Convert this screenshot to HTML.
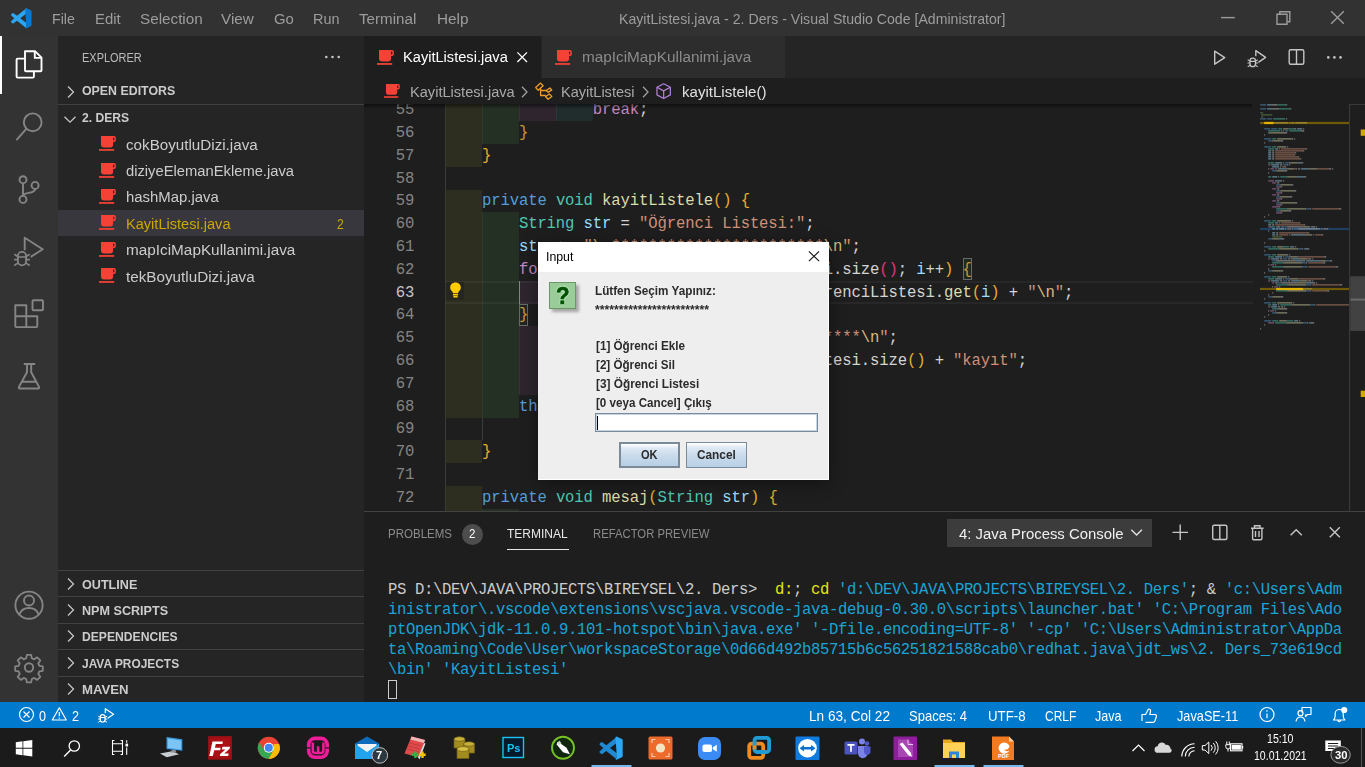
<!DOCTYPE html>
<html><head><meta charset="utf-8"><title>VS Code</title>
<style>
*{margin:0;padding:0;box-sizing:border-box}
html,body{width:1365px;height:767px;overflow:hidden;background:#1e1e1e}
body{position:relative;font-family:"Liberation Sans",sans-serif}
.a{position:absolute}
.t{position:absolute;white-space:pre;line-height:20px;height:20px;transform-origin:0 50%;display:block}
.fs{font-family:"Liberation Sans",sans-serif}
.fm{font-family:"Liberation Mono",monospace}
svg{position:absolute;overflow:visible}
.cl{position:absolute;left:445px;height:23px;white-space:pre;font-family:"Liberation Mono",monospace;font-size:15.6px;letter-spacing:-0.12px;line-height:23px;color:#d4d4d4}
.ln{position:absolute;left:364px;width:50.3px;text-align:right;height:23px;font-family:"Liberation Mono",monospace;font-size:15.6px;letter-spacing:-0.12px;line-height:23px;color:#858585}
.ig{position:absolute;width:37px}
.tl{position:absolute;left:388px;height:20px;white-space:pre;font-family:"Liberation Mono",monospace;font-size:15.6px;letter-spacing:-0.12px;line-height:20px;color:#1ba4d6}
.tl{letter-spacing:-0.36px}

</style></head>
<body>
<!-- title bar -->
<div class="a" style="left:0;top:0;width:1365px;height:36px;background:#323233"></div>
<!-- activity bar -->
<div class="a" style="left:0;top:36px;width:58px;height:666px;background:#333333"></div>
<div class="a" style="left:0;top:36px;width:2px;height:58px;background:#ffffff"></div>
<!-- sidebar -->
<div class="a" style="left:58px;top:36px;width:306px;height:666px;background:#252526"></div>
<div class="a" style="left:58px;top:104px;width:306px;height:1px;background:#414141"></div>
<div class="a" style="left:58px;top:210px;width:306px;height:26px;background:#37373d"></div>
<div class="a" style="left:58px;top:570px;width:306px;height:1px;background:#414141"></div>
<div class="a" style="left:58px;top:596px;width:306px;height:1px;background:#414141"></div>
<div class="a" style="left:58px;top:623px;width:306px;height:1px;background:#414141"></div>
<div class="a" style="left:58px;top:649px;width:306px;height:1px;background:#414141"></div>
<div class="a" style="left:58px;top:676px;width:306px;height:1px;background:#414141"></div>
<!-- tabs -->
<div class="a" style="left:364px;top:36px;width:1001px;height:42px;background:#252526"></div>
<div class="a" style="left:364px;top:36px;width:177px;height:42px;background:#1e1e1e"></div>
<div class="a" style="left:542px;top:36px;width:243px;height:42px;background:#2d2d2d"></div>
<!-- breadcrumbs + editor -->
<div class="a" style="left:364px;top:78px;width:1001px;height:434px;background:#1e1e1e"></div>
<!-- panel -->
<div class="a" style="left:364px;top:511px;width:1001px;height:1px;background:#424242"></div>
<div class="a" style="left:364px;top:512px;width:1001px;height:190px;background:#1e1e1e"></div>
<div class="a" style="left:507px;top:549px;width:62px;height:1px;background:#e7e7e7"></div>
<div class="a" style="left:462px;top:524px;width:21px;height:21px;border-radius:11px;background:#4d4d4d"></div>
<div class="a" style="left:947px;top:519px;width:205px;height:28px;background:#3c3c3c"></div>
<div class="a" style="left:388px;top:680px;width:9px;height:19px;border:1px solid #cccccc"></div>
<!-- status bar -->
<div class="a" style="left:0;top:702px;width:1365px;height:26px;background:#007acc"></div>
<!-- taskbar -->
<div class="a" style="left:0;top:728px;width:1365px;height:39px;background:#1b1b1b"></div>

<svg width="0" height="0" style="left:0;top:0"><defs>
<symbol id="jv" viewBox="0 0 17 15" overflow="visible"><path d="M2 0H15a1.9 1.9 0 0 1 1.9 1.9V4.1A1.9 1.9 0 0 1 15 6H14.1V8.5a3 3 0 0 1-3 3H5a3 3 0 0 1-3-3zM14.1 1.6V4.4H14.6a.8 .8 0 0 0 .8-.8V2.4a.8 .8 0 0 0-.8-.8z" fill="#f44336" fill-rule="evenodd"/><rect x="0" y="13" width="15.2" height="1.9" fill="#e53f33"/></symbol>
<symbol id="chr" viewBox="0 0 8 12" overflow="visible"><path d="M1 .5l5.5 5.5L1 11.5" fill="none" stroke="#c5c5c5" stroke-width="1.3"/></symbol>
</defs></svg>
<!-- vscode logo -->
<svg style="left:10.5px;top:8px" width="20.5" height="20.5" viewBox="0 0 100 100"><path d="M75 .9 29.4 38 12.2 25a4.2 4.2 0 0 0-5.3.2L1.4 30.2a4.2 4.2 0 0 0 0 6.2L16.3 50 1.4 63.6a4.2 4.2 0 0 0 0 6.2l5.5 5a4.2 4.2 0 0 0 5.3.2l17.2-13L75 99.1 75 72.7 45.1 50 75 27.3z" fill="#2aa6f3"/><path d="M68.8 2.1a6.2 6.2 0 0 1 7.1-1.2l20.6 9.9a6.2 6.2 0 0 1 3.5 5.6v67.2a6.2 6.2 0 0 1-3.5 5.6l-20.6 9.9a6.2 6.2 0 0 1-7.1-1.2L75 92z" fill="#0b78cf"/></svg>
<!-- window controls -->
<svg style="left:0;top:0" width="1365" height="36"><g fill="none" stroke="#9c9c9c" stroke-width="1.400"><path d="M1221 17.6h13.8"/><path d="M1277 14.2h10v10h-10z"/><path d="M1279.8 14.2v-2.4h10v10h-2.6"/><path d="M1331.2 11.2l12.6 12.6M1343.8 11.2l-12.6 12.6"/></g></svg>
<!-- activity bar -->
<svg style="left:0;top:36px" width="58" height="666" viewBox="0 36 58 666"><g fill="none" stroke="#858585" stroke-width="1.9" stroke-linejoin="round">
<g stroke="#ffffff"><path d="M25 51.2h10l6.5 6.5v12.5a1 1 0 0 1-1 1H26a1 1 0 0 1-1-1z"/><path d="M34.8 51.2v6.7h6.7"/><path d="M25 58.6h-7.4a1 1 0 0 0-1 1v17a1 1 0 0 0 1 1h15.3a1 1 0 0 0 1-1v-5.4"/></g>
<circle cx="32.7" cy="122.3" r="8.9"/><path d="M26.3 128.8 16.4 140.2"/>
<circle cx="23" cy="179.7" r="3.5"/><circle cx="23" cy="199.4" r="3.5"/><circle cx="35.1" cy="185.4" r="3.5"/><path d="M23 183.2v12.7M35.1 188.9c0 5.5-12.1 2.500-12.1 7"/>
<path d="M24.700 250.300v-12.500l18 11.400-12 7.700"/><rect x="17.900" y="251.900" width="8.200" height="13.500" rx="4.100" stroke-width="1.800"/><path d="M17.900 257h8.200M14.300 254.300l3.500 2.200M29.600 254.300l-3.500 2.200M14.100 259.600h3.700M29.900 259.600h-3.700M14.300 265.500l3.500-2.400M29.600 265.500l-3.500-2.400" stroke-width="1.600"/>
<path d="M15.300 305.300h11v11h-11zM15.300 316.300h11v10.800h-10a1 1 0 0 1-1-1zM26.300 316.300h11v9.800a1 1 0 0 1-1 1h-10z"/><rect x="32.500" y="300.200" width="10.500" height="10" rx="1"/>
<path d="M23.800 364h11.400M27 364v8.300L18.900 387a1 1 0 0 0 .9 1.500h18.400a1 1 0 0 0 .9-1.500L31.200 372.300V364M21.800 381.800h14.600"/>
<circle cx="29" cy="605.200" r="13.600"/><circle cx="29" cy="600.500" r="5"/><path d="M19.500 614.500c1.500-4.800 5.500-6.500 9.500-6.500s8 1.700 9.500 6.500"/>
<circle cx="29" cy="667.500" r="4.200"/>
<path transform="translate(29 667.500) scale(.94) translate(-29 -667.500)" d="M26.700 654h4.600l.7 3.700 2.600 1.100 3.100-2.100 3.300 3.300-2.100 3.100 1.100 2.600 3.700.7v4.600l-3.700.7-1.100 2.600 2.100 3.100-3.300 3.300-3.100-2.100-2.600 1.100-.7 3.700h-4.600l-.7-3.700-2.600-1.100-3.100 2.100-3.300-3.300 2.100-3.100-1.100-2.600-3.700-.7v-4.600l3.700-.7 1.100-2.600-2.100-3.100 3.300-3.300 3.100 2.100 2.600-1.100z"/>
</g></svg>
<!-- sidebar chevrons, dots, file icons -->

<svg style="left:66.500px;top:86px" width="8" height="12"><use href="#chr"/></svg>
<svg style="left:63.700px;top:115.500px" width="12" height="8" viewBox="0 0 12 8"><path d="M.5 .7l5.500 5.500 5.500-5.500" fill="none" stroke="#c5c5c5" stroke-width="1.300"/></svg>
<svg style="left:66.500px;top:577.500px" width="8" height="12"><use href="#chr"/></svg>
<svg style="left:66.500px;top:603.900px" width="8" height="12"><use href="#chr"/></svg>
<svg style="left:66.500px;top:630.300px" width="8" height="12"><use href="#chr"/></svg>
<svg style="left:66.500px;top:656.700px" width="8" height="12"><use href="#chr"/></svg>
<svg style="left:66.500px;top:683.100px" width="8" height="12"><use href="#chr"/></svg>
<svg style="left:324px;top:53.500px" width="18" height="6"><g fill="#c5c5c5"><circle cx="2.300" cy="3" r="1.300"/><circle cx="8.500" cy="3" r="1.300"/><circle cx="14.700" cy="3" r="1.300"/></g></svg>
<svg style="left:99px;top:136.100px" width="17" height="15"><use href="#jv"/></svg>
<svg style="left:99px;top:162.500px" width="17" height="15"><use href="#jv"/></svg>
<svg style="left:99px;top:188.900px" width="17" height="15"><use href="#jv"/></svg>
<svg style="left:99px;top:215.300px" width="17" height="15"><use href="#jv"/></svg>
<svg style="left:99px;top:241.700px" width="17" height="15"><use href="#jv"/></svg>
<svg style="left:99px;top:268.100px" width="17" height="15"><use href="#jv"/></svg>
<!-- tabs -->
<svg style="left:377px;top:50.300px" width="17" height="15"><use href="#jv"/></svg>
<svg style="left:555.300px;top:50.300px" width="17" height="15"><use href="#jv"/></svg>
<svg style="left:517.300px;top:52.300px" width="11" height="11"><path d="M.4 .4l9.600 9.600M10 .4L.4 10" stroke="#ffffff" stroke-width="1.300" fill="none"/></svg>
<!-- breadcrumbs -->
<svg style="left:384.300px;top:84.100px" width="16" height="14" viewBox="0 0 17 15"><use href="#jv"/></svg>
<svg style="left:520.500px;top:85.500px" width="8" height="12"><path d="M1 .8l5 5.200-5 5.200" fill="none" stroke="#a0a0a0" stroke-width="1.300"/></svg>
<svg style="left:641.800px;top:85.500px" width="8" height="12"><path d="M1 .8l5 5.200-5 5.200" fill="none" stroke="#a0a0a0" stroke-width="1.300"/></svg>
<svg style="left:515px;top:78px" width="40" height="28" viewBox="0 0 40 28"><g fill="none" stroke="#ee9d28" stroke-width="1.300" stroke-linejoin="round"><path d="M20.700 9.600l4.900-4.500 2.500 2.600-4.900 4.500zM31.200 12.600l3.700-2.600 1.900 1.900-3.700 2.500zM30.600 18.700l3.700-2.800 2.500 2.500-3.700 2.800z"/><path d="M25.600 10.500v7h5.300M25.600 12.500h5.800"/></g></svg>
<svg style="left:656.300px;top:82.500px" width="15.300" height="16.300" viewBox="0 0 16 17"><g fill="none" stroke="#b180d7" stroke-width="1.300" stroke-linejoin="round"><path d="M8 .8l7 3.600v8l-7 3.800-7-3.800v-8z"/><path d="M1 4.400l7 3.800 7-3.800M8 8.200v8"/></g></svg>
<!-- editor actions -->
<svg style="left:1200px;top:44px" width="160" height="30" viewBox="1200 44 160 30"><g fill="none" stroke="#c5c5c5" stroke-width="1.400" stroke-linejoin="round"><path d="M1214.700 51.200v13l10-6.500z"/><path d="M1255.800 56.200v-5.600l9.800 6.800-7.200 4.900"/><rect x="1250" y="58.100" width="5.500" height="8.600" rx="2.700" stroke-width="1.300"/><path d="M1250 61.400h5.500M1247.700 59.700l2.300 1.400M1257.800 59.700l-2.300 1.400M1247.500 63h2.400M1258 63h-2.400M1247.700 66.900l2.300-1.600M1257.800 66.900l-2.300-1.600" stroke-width="1.100"/><rect x="1289.200" y="49.700" width="14.600" height="14.600" rx="1.500"/><path d="M1296.500 49.700v14.600"/></g><g fill="#c5c5c5"><circle cx="1328.300" cy="57.400" r="1.300"/><circle cx="1334.400" cy="57.400" r="1.300"/><circle cx="1340.500" cy="57.400" r="1.300"/></g></svg>
<!-- panel actions -->
<svg style="left:1125px;top:519px" width="225" height="28" viewBox="1125 519 225 28"><g fill="none" stroke="#c5c5c5" stroke-width="1.400"><path d="M1131.300 529.800l5.300 5.300 5.300-5.300" stroke="#e0e0e0"/><path d="M1172.500 532.400h15.500M1180.200 524.600v15.500"/><rect x="1212.700" y="525.300" width="14.200" height="14.200" rx="1.500"/><path d="M1219.800 525.300v14.200"/><path d="M1251 528.200h12.600M1254.500 528v-2.300h5.500v2.300M1252.600 528.500v10a1.300 1.300 0 0 0 1.300 1.300h6.700a1.300 1.300 0 0 0 1.300-1.300v-10M1255.500 531v6M1259 531v6"/><path d="M1290.600 535.300l5.600-5.600 5.600 5.600"/><path d="M1329.800 527.200l10 10M1339.800 527.200l-10 10"/></g></svg>
<!-- status bar icons -->
<svg style="left:0;top:702px" width="1365" height="26" viewBox="0 702 1365 26"><g fill="none" stroke="#ffffff" stroke-width="1.200" stroke-linejoin="round"><circle cx="26.500" cy="714.500" r="7"/><path d="M23.500 711.500l6 6M29.500 711.500l-6 6"/><path d="M59.300 707.800l7 12.200h-14z"/><path d="M59.300 712v4.300M59.300 717.400v1.300"/>
<path d="M105.300 713v-4.300l8.300 5.500-6 4"/><rect x="100.300" y="714.700" width="4.700" height="7.300" rx="2.300" stroke-width="1.200"/><path d="M100.300 717.500h4.700M98.300 716.200l2 1.200M107 716.200l-2 1.200M98.100 719h2.200M107.200 719h-2.200M98.300 722.300l2-1.400M107 722.300l-2-1.400" stroke-width="1"/>
<path d="M1142 721v-6.500h3.500l3-5.500c1.500 0 2.300 1 2 2.500l-.7 3h5.200c1 0 1.700 1 1.400 2l-1.500 4.500c-.3.800-1 1.300-1.800 1.300h-7.600"/>
<circle cx="1267" cy="714.500" r="7"/><path d="M1267 713.500v4.800M1267 710.300v1.500"/>
<path d="M1302 712.500v-5h9v7h-3.500l-2 2v-2"/><circle cx="1300.500" cy="713.200" r="2.500"/><path d="M1296 721.500c.5-3 2.200-4.500 4.500-4.500s4 1.500 4.500 4.500"/>
<path d="M1333.500 720c1.200-1.200 1.700-2.500 1.700-4.500v-2a4 4 0 0 1 8 0v2c0 2 .5 3.300 1.700 4.500zM1337.700 720.500a1.600 1.600 0 0 0 3 0"/></g><circle cx="1344.200" cy="710" r="3.100" fill="#ffffff"/></svg>

<div class="a" style="left:364px;top:104px;width:889px;height:407px;overflow:hidden"><div class="a" style="left:-364px;top:-104px;width:1365px;height:767px">
<div class="ig" style="left:445.4px;top:98px;height:23px;background:#2e2e20"></div>
<div class="ig" style="left:482.4px;top:98px;height:23px;background:#253025"></div>
<div class="ig" style="left:519.4px;top:98px;height:23px;background:#2e252e"></div>
<div class="ig" style="left:556.4px;top:98px;height:23px;background:#212c2c"></div>
<div class="ig" style="left:445.4px;top:121px;height:23px;background:#2e2e20"></div>
<div class="ig" style="left:482.4px;top:121px;height:23px;background:#253025"></div>
<div class="ig" style="left:445.4px;top:144px;height:23px;background:#2e2e20"></div>
<div class="ig" style="left:445.4px;top:190px;height:22px;background:#2e2e20"></div>
<div class="ig" style="left:445.4px;top:212px;height:23px;background:#2e2e20"></div>
<div class="ig" style="left:482.4px;top:212px;height:23px;background:#253025"></div>
<div class="ig" style="left:445.4px;top:235px;height:23px;background:#2e2e20"></div>
<div class="ig" style="left:482.4px;top:235px;height:23px;background:#253025"></div>
<div class="ig" style="left:445.4px;top:258px;height:23px;background:#2e2e20"></div>
<div class="ig" style="left:482.4px;top:258px;height:23px;background:#253025"></div>
<div class="ig" style="left:445.4px;top:281px;height:23px;background:#2e2e20"></div>
<div class="ig" style="left:482.4px;top:281px;height:23px;background:#253025"></div>
<div class="ig" style="left:519.4px;top:281px;height:23px;background:#2e252e"></div>
<div class="ig" style="left:445.4px;top:304px;height:22px;background:#2e2e20"></div>
<div class="ig" style="left:482.4px;top:304px;height:22px;background:#253025"></div>
<div class="ig" style="left:445.4px;top:326px;height:23px;background:#2e2e20"></div>
<div class="ig" style="left:482.4px;top:326px;height:23px;background:#253025"></div>
<div class="ig" style="left:519.4px;top:326px;height:23px;background:#2e252e"></div>
<div class="ig" style="left:445.4px;top:349px;height:23px;background:#2e2e20"></div>
<div class="ig" style="left:482.4px;top:349px;height:23px;background:#253025"></div>
<div class="ig" style="left:519.4px;top:349px;height:23px;background:#2e252e"></div>
<div class="ig" style="left:445.4px;top:372px;height:23px;background:#2e2e20"></div>
<div class="ig" style="left:482.4px;top:372px;height:23px;background:#253025"></div>
<div class="ig" style="left:519.4px;top:372px;height:23px;background:#2e252e"></div>
<div class="ig" style="left:445.4px;top:395px;height:23px;background:#2e2e20"></div>
<div class="ig" style="left:482.4px;top:395px;height:23px;background:#253025"></div>
<div class="ig" style="left:445.4px;top:440px;height:23px;background:#2e2e20"></div>
<div class="ig" style="left:445.4px;top:486px;height:23px;background:#2e2e20"></div>
<div class="ig" style="left:445.4px;top:509px;height:23px;background:#2e2e20"></div>
<div class="ig" style="left:482.4px;top:509px;height:23px;background:#253025"></div>
<div class="a" style="left:445.4px;top:98px;height:23px;width:1px;background:rgba(255,255,255,.06)"></div>
<div class="a" style="left:482.4px;top:98px;height:23px;width:1px;background:rgba(255,255,255,.06)"></div>
<div class="a" style="left:519.4px;top:98px;height:23px;width:1px;background:rgba(255,255,255,.06)"></div>
<div class="a" style="left:556.4px;top:98px;height:23px;width:1px;background:rgba(255,255,255,.06)"></div>
<div class="a" style="left:445.4px;top:121px;height:23px;width:1px;background:rgba(255,255,255,.06)"></div>
<div class="a" style="left:482.4px;top:121px;height:23px;width:1px;background:rgba(255,255,255,.06)"></div>
<div class="a" style="left:445.4px;top:144px;height:23px;width:1px;background:rgba(255,255,255,.06)"></div>
<div class="a" style="left:445.4px;top:190px;height:22px;width:1px;background:rgba(255,255,255,.06)"></div>
<div class="a" style="left:445.4px;top:212px;height:23px;width:1px;background:rgba(255,255,255,.06)"></div>
<div class="a" style="left:482.4px;top:212px;height:23px;width:1px;background:rgba(255,255,255,.06)"></div>
<div class="a" style="left:445.4px;top:235px;height:23px;width:1px;background:rgba(255,255,255,.06)"></div>
<div class="a" style="left:482.4px;top:235px;height:23px;width:1px;background:rgba(255,255,255,.06)"></div>
<div class="a" style="left:445.4px;top:258px;height:23px;width:1px;background:rgba(255,255,255,.06)"></div>
<div class="a" style="left:482.4px;top:258px;height:23px;width:1px;background:rgba(255,255,255,.06)"></div>
<div class="a" style="left:445.4px;top:281px;height:23px;width:1px;background:rgba(255,255,255,.06)"></div>
<div class="a" style="left:482.4px;top:281px;height:23px;width:1px;background:rgba(255,255,255,.06)"></div>
<div class="a" style="left:519.4px;top:281px;height:23px;width:1px;background:rgba(255,255,255,.06)"></div>
<div class="a" style="left:445.4px;top:304px;height:22px;width:1px;background:rgba(255,255,255,.06)"></div>
<div class="a" style="left:482.4px;top:304px;height:22px;width:1px;background:rgba(255,255,255,.06)"></div>
<div class="a" style="left:445.4px;top:326px;height:23px;width:1px;background:rgba(255,255,255,.06)"></div>
<div class="a" style="left:482.4px;top:326px;height:23px;width:1px;background:rgba(255,255,255,.06)"></div>
<div class="a" style="left:519.4px;top:326px;height:23px;width:1px;background:rgba(255,255,255,.06)"></div>
<div class="a" style="left:445.4px;top:349px;height:23px;width:1px;background:rgba(255,255,255,.06)"></div>
<div class="a" style="left:482.4px;top:349px;height:23px;width:1px;background:rgba(255,255,255,.06)"></div>
<div class="a" style="left:519.4px;top:349px;height:23px;width:1px;background:rgba(255,255,255,.06)"></div>
<div class="a" style="left:445.4px;top:372px;height:23px;width:1px;background:rgba(255,255,255,.06)"></div>
<div class="a" style="left:482.4px;top:372px;height:23px;width:1px;background:rgba(255,255,255,.06)"></div>
<div class="a" style="left:519.4px;top:372px;height:23px;width:1px;background:rgba(255,255,255,.06)"></div>
<div class="a" style="left:445.4px;top:395px;height:23px;width:1px;background:rgba(255,255,255,.06)"></div>
<div class="a" style="left:482.4px;top:395px;height:23px;width:1px;background:rgba(255,255,255,.06)"></div>
<div class="a" style="left:445.4px;top:440px;height:23px;width:1px;background:rgba(255,255,255,.06)"></div>
<div class="a" style="left:445.4px;top:486px;height:23px;width:1px;background:rgba(255,255,255,.06)"></div>
<div class="a" style="left:445.4px;top:509px;height:23px;width:1px;background:rgba(255,255,255,.06)"></div>
<div class="a" style="left:482.4px;top:509px;height:23px;width:1px;background:rgba(255,255,255,.06)"></div>
<div class="a" style="left:445.4px;top:167px;height:23px;width:1px;background:#3c3c3c"></div>
<div class="a" style="left:445.4px;top:418px;height:22px;width:1px;background:#3c3c3c"></div>
<div class="a" style="left:482.4px;top:418px;height:22px;width:1px;background:#3c3c3c"></div>
<div class="a" style="left:445.4px;top:463px;height:23px;width:1px;background:#3c3c3c"></div>
<div class="a" style="left:445px;top:281px;width:808px;height:23px;border-top:2px solid rgba(255,255,255,.045);border-bottom:2px solid rgba(255,255,255,.045)"></div>
<div class="a" style="left:519.3px;top:281px;width:1px;height:23px;background:#7d877d"></div>
<div class="a" style="left:962.7px;top:258px;width:9px;height:22px;border:1px solid #6a6a6a;background:#1f2a1f"></div>
<div class="a" style="left:519.4px;top:304px;width:9px;height:22px;border:1px solid #6a6a6a;background:#222622"></div>
<div class="ln" style="top:99.1px;color:#858585">55</div>
<div class="cl" style="top:99.1px">                <span style="color:#c586c0">break</span>;</div>
<div class="ln" style="top:121.9px;color:#858585">56</div>
<div class="cl" style="top:121.9px">        <span style="color:#c8963c">}</span></div>
<div class="ln" style="top:144.7px;color:#858585">57</div>
<div class="cl" style="top:144.7px">    <span style="color:#e8ad2c">}</span></div>
<div class="ln" style="top:167.5px;color:#858585">58</div>
<div class="ln" style="top:190.3px;color:#858585">59</div>
<div class="cl" style="top:190.3px">    <span style="color:#569cd6">private</span> <span style="color:#4ec9b0">void</span> <span style="color:#dcdcaa">kayitListele</span><span style="color:#e8ad2c">()</span> <span style="color:#e8ad2c">{</span></div>
<div class="ln" style="top:213.1px;color:#858585">60</div>
<div class="cl" style="top:213.1px">        <span style="color:#4ec9b0">String</span> <span style="color:#9cdcfe">str</span> = <span style="color:#ce9178">"Öğrenci Listesi:"</span>;</div>
<div class="ln" style="top:235.9px;color:#858585">61</div>
<div class="cl" style="top:235.9px">        <span style="color:#9cdcfe">str</span> += <span style="color:#ce9178">"</span><span style="color:#d7ba7d">\n</span><span style="color:#ce9178">***********************</span><span style="color:#d7ba7d">\n</span><span style="color:#ce9178">"</span>;</div>
<div class="ln" style="top:258.7px;color:#858585">62</div>
<div class="cl" style="top:258.7px">        <span style="color:#c586c0">for</span><span style="color:#e8ad2c">(</span><span style="color:#4ec9b0">int</span> <span style="color:#9cdcfe">i</span>=<span style="color:#b5cea8">0</span>; <span style="color:#9cdcfe">i</span>&lt;<span style="color:#569cd6">this</span>.ogrenciListesi.size<span style="color:#e0357f">()</span>; <span style="color:#9cdcfe">i</span>++<span style="color:#e8ad2c">)</span> <span style="color:#c8963c">{</span></div>
<div class="ln" style="top:281.5px;color:#c6c6c6">63</div>
<div class="cl" style="top:281.5px">            <span style="color:#9cdcfe">str</span> += <span style="color:#e8ad2c">(</span><span style="color:#9cdcfe">i</span>+<span style="color:#b5cea8">1</span><span style="color:#e8ad2c">)</span> + <span style="color:#ce9178">". "</span> + <span style="color:#569cd6">this</span>.ogrenciListesi.<span style="color:#dcdcaa">get</span><span style="color:#e8ad2c">(</span><span style="color:#9cdcfe">i</span><span style="color:#e8ad2c">)</span> + <span style="color:#ce9178">"</span><span style="color:#d7ba7d">\n</span><span style="color:#ce9178">"</span>;</div>
<div class="ln" style="top:304.3px;color:#858585">64</div>
<div class="cl" style="top:304.3px">        <span style="color:#c8963c">}</span></div>
<div class="ln" style="top:327.1px;color:#858585">65</div>
<div class="cl" style="top:327.1px">            <span style="color:#9cdcfe">str</span> += <span style="color:#ce9178">"</span><span style="color:#d7ba7d">\n</span><span style="color:#ce9178">***********************</span><span style="color:#d7ba7d">\n</span><span style="color:#ce9178">"</span>;</div>
<div class="ln" style="top:349.9px;color:#858585">66</div>
<div class="cl" style="top:349.9px">            <span style="color:#9cdcfe">str</span> += <span style="color:#ce9178">"Toplam "</span> + ogrenciListesi.size<span style="color:#e8ad2c">()</span> + <span style="color:#ce9178">"kayıt"</span>;</div>
<div class="ln" style="top:372.7px;color:#858585">67</div>
<div class="ln" style="top:395.5px;color:#858585">68</div>
<div class="cl" style="top:395.5px">        <span style="color:#569cd6">this</span>.<span style="color:#dcdcaa">mesaj</span><span style="color:#e8ad2c">(</span><span style="color:#9cdcfe">str</span><span style="color:#e8ad2c">)</span>;</div>
<div class="ln" style="top:418.3px;color:#858585">69</div>
<div class="ln" style="top:441.1px;color:#858585">70</div>
<div class="cl" style="top:441.1px">    <span style="color:#e8ad2c">}</span></div>
<div class="ln" style="top:463.9px;color:#858585">71</div>
<div class="ln" style="top:486.7px;color:#858585">72</div>
<div class="cl" style="top:486.7px">    <span style="color:#569cd6">private</span> <span style="color:#4ec9b0">void</span> <span style="color:#dcdcaa">mesaj</span><span style="color:#e8ad2c">(</span><span style="color:#4ec9b0">String</span> <span style="color:#9cdcfe">str</span><span style="color:#e8ad2c">)</span> <span style="color:#e8ad2c">{</span></div>
<div class="ln" style="top:509.5px;color:#858585">73</div>
<div class="cl" style="top:509.5px">        <span style="color:#4ec9b0">JOptionPane</span>.<span style="color:#dcdcaa">showMessageDialog</span><span style="color:#e8ad2c">(</span><span style="color:#569cd6">null</span>, <span style="color:#9cdcfe">str</span><span style="color:#e8ad2c">)</span>;</div>
<div class="a" style="left:445.5px;top:281.8px;width:18.3px;height:18.3px;background:#262621"></div>
<svg style="left:449.3px;top:282.2px" width="13" height="16.5" viewBox="0.5 0 13 17" preserveAspectRatio="none"><path d="M7 0.5C3.8 0.5 1.7 2.8 1.7 5.6c0 1.8 0.9 3 1.8 4 .6.7.9 1.3.9 2.1h5.2c0-.8.3-1.4.9-2.1.9-1 1.8-2.2 1.8-4C12.3 2.8 10.2 0.5 7 0.5z" fill="#ffcc00"/><rect x="4.4" y="12.3" width="5.2" height="1.6" fill="#ffcc00"/><rect x="4.9" y="14.4" width="4.2" height="1.6" fill="#ffcc00"/></svg>
</div></div>
<div class="tl" style="top:580px"><span style="color:#cccccc">PS D:\DEV\JAVA\PROJECTS\BIREYSEL\2. Ders&gt;  </span><span style="color:#e5e510">d:</span><span style="color:#cccccc">; </span><span style="color:#e5e510">cd</span><span style="color:#cccccc"> </span><span style="color:#1ba4d6">'d:\DEV\JAVA\PROJECTS\BIREYSEL\2. Ders'</span><span style="color:#cccccc">; &amp; </span><span style="color:#1ba4d6">'c:\Users\Adm</span></div>
<div class="tl" style="top:600px"><span style="color:#1ba4d6">inistrator\.vscode\extensions\vscjava.vscode-java-debug-0.30.0\scripts\launcher.bat' 'C:\Program Files\Ado</span></div>
<div class="tl" style="top:620px"><span style="color:#1ba4d6">ptOpenJDK\jdk-11.0.9.101-hotspot\bin\java.exe' '-Dfile.encoding=UTF-8' '-cp' 'C:\Users\Administrator\AppDa</span></div>
<div class="tl" style="top:640px"><span style="color:#1ba4d6">ta\Roaming\Code\User\workspaceStorage\0d66d492b85715b6c56251821588cab0\redhat.java\jdt_ws\2. Ders_73e619cd</span></div>
<div class="tl" style="top:660px"><span style="color:#1ba4d6">\bin' 'KayitListesi'</span></div>
<!-- minimap -->
<svg style="left:0;top:0" width="1365" height="520" viewBox="0 0 1365 520">
<rect x="1260" y="121.9" width="89.6" height="2.2" fill="#6f5b06"/>
<rect x="1260" y="287.9" width="89.6" height="2.2" fill="#6f5b06"/>
<rect x="1260" y="227.9" width="89.6" height="2.2" fill="#1f3f60"/>
<rect x="1264.2" y="121.9" width="9.5" height="2.2" fill="#e2b400"/>
<rect x="1276.2" y="287.9" width="27" height="2.2" fill="#e2b400"/>
<path d="M1274.2 122.9h14M1289.2 122.9h1M1291.2 122.9h3M1295.2 122.9h9M1304.2 122.9h3M1303.2 288.9h7M1310.2 288.9h2" stroke="#c9b25e" stroke-width="1.2" opacity=".56" fill="none"/>
<path d="M1260.2 104.9h6M1260.2 108.9h6M1260.2 118.9h6M1267.2 118.9h5M1264.2 128.9h6M1271.2 128.9h6M1285.2 130.9h3M1264.2 138.9h7M1268.2 140.9h4M1264.2 146.9h7M1285.2 162.9h4M1283.2 164.9h4M1272.2 170.9h4M1276.2 184.9h4M1276.2 190.9h4M1276.2 196.9h4M1276.2 202.9h4M1306.2 208.9h4M1276.2 210.9h4M1264.2 220.9h7M1283.2 226.9h4M1294.2 228.9h4M1268.2 238.9h4M1264.2 246.9h7M1298.2 248.9h4M1264.2 254.9h7M1285.2 256.9h4M1283.2 258.9h4M1272.2 260.9h4M1326.2 260.9h4M1302.2 262.9h4M1302.2 266.9h4M1268.2 270.9h4M1264.2 276.9h7M1285.2 278.9h4M1283.2 280.9h4M1277.2 282.9h4M1306.2 284.9h4M1306.2 290.9h4M1268.2 296.9h4M1264.2 302.9h7M1310.2 304.9h4M1272.2 312.9h4M1264.2 320.9h7M1303.2 322.9h4" stroke="#569cd6" stroke-width="1.2" opacity=".56" fill="none"/>
<path d="M1268.2 164.9h2M1270.2 168.9h4M1275.2 168.9h2M1268.2 180.9h6M1272.2 182.9h4M1276.2 186.9h5M1272.2 188.9h4M1276.2 192.9h5M1272.2 194.9h4M1276.2 198.9h5M1272.2 200.9h4M1276.2 204.9h5M1272.2 206.9h7M1276.2 212.9h5M1268.2 226.9h3M1268.2 258.9h2M1270.2 264.9h4M1268.2 280.9h2M1272.2 282.9h2M1274.2 286.9h4M1268.2 306.9h2M1270.2 310.9h4M1268.2 322.9h6" stroke="#c586c0" stroke-width="1.2" opacity=".56" fill="none"/>
<path d="M1277.2 104.9h9M1279.2 108.9h11M1273.2 118.9h12M1278.2 128.9h4M1288.2 128.9h6M1268.2 130.9h12M1289.2 130.9h12M1272.2 138.9h4M1272.2 146.9h4M1268.2 148.9h6M1268.2 162.9h6M1268.2 176.9h3M1280.2 176.9h7M1276.2 208.9h11M1272.2 220.9h4M1268.2 222.9h6M1272.2 226.9h3M1272.2 246.9h4M1283.2 246.9h6M1268.2 248.9h11M1272.2 254.9h4M1268.2 256.9h6M1272.2 262.9h11M1272.2 266.9h11M1272.2 276.9h4M1268.2 278.9h6M1276.2 284.9h11M1276.2 290.9h11M1272.2 302.9h4M1268.2 304.9h3M1280.2 304.9h11M1272.2 308.9h6M1272.2 320.9h6M1287.2 320.9h6M1275.2 322.9h11" stroke="#4ec9b0" stroke-width="1.2" opacity=".56" fill="none"/>
<path d="M1283.2 128.9h4M1270.2 132.9h14M1277.2 138.9h14M1273.2 140.9h7M1277.2 146.9h7M1290.2 162.9h7M1287.2 168.9h6M1309.2 168.9h7M1277.2 170.9h7M1288.2 176.9h8M1281.2 184.9h9M1281.2 190.9h12M1281.2 196.9h8M1281.2 202.9h13M1288.2 208.9h17M1281.2 210.9h7M1277.2 220.9h12M1303.2 226.9h4M1314.2 228.9h3M1306.2 234.9h4M1273.2 238.9h5M1277.2 246.9h5M1280.2 248.9h17M1277.2 254.9h9M1290.2 256.9h7M1300.2 258.9h6M1292.2 260.9h3M1321.2 260.9h4M1284.2 262.9h17M1284.2 266.9h17M1273.2 270.9h7M1277.2 276.9h8M1290.2 278.9h7M1300.2 280.9h6M1297.2 282.9h8M1288.2 284.9h17M1288.2 290.9h17M1273.2 296.9h7M1277.2 302.9h13M1292.2 304.9h17M1279.2 308.9h4M1277.2 312.9h7M1279.2 320.9h7M1287.2 322.9h15" stroke="#dcdcaa" stroke-width="1.2" opacity=".56" fill="none"/>
<path d="M1267.2 104.9h4M1267.2 108.9h5M1297.2 128.9h4M1281.2 130.9h1M1268.2 132.9h1M1275.2 148.9h3M1268.2 150.9h3M1268.2 152.9h3M1268.2 154.9h3M1268.2 156.9h3M1268.2 158.9h3M1275.2 162.9h7M1298.2 162.9h3M1272.2 164.9h7M1272.2 166.9h7M1279.2 168.9h7M1301.2 168.9h7M1272.2 176.9h5M1297.2 176.9h7M1276.2 180.9h5M1275.2 222.9h3M1268.2 224.9h3M1276.2 226.9h1M1281.2 226.9h1M1311.2 226.9h1M1272.2 228.9h3M1280.2 228.9h1M1318.2 228.9h1M1272.2 232.9h3M1272.2 234.9h3M1291.2 234.9h14M1279.2 238.9h3M1290.2 246.9h3M1304.2 248.9h3M1275.2 256.9h7M1272.2 258.9h7M1292.2 258.9h7M1296.2 260.9h7M1306.2 260.9h14M1275.2 278.9h7M1272.2 280.9h7M1292.2 280.9h7M1306.2 282.9h7M1272.2 304.9h5M1272.2 306.9h5M1294.2 320.9h3M1309.2 322.9h3" stroke="#9cdcfe" stroke-width="1.2" opacity=".56" fill="none"/>
<path d="M1281.2 148.9h25M1275.2 150.9h28M1275.2 152.9h20M1275.2 154.9h19M1275.2 156.9h23M1275.2 158.9h25M1282.2 166.9h3M1294.2 168.9h2M1317.2 168.9h12M1312.2 208.9h27M1281.2 222.9h18M1275.2 224.9h29M1287.2 228.9h4M1323.2 228.9h4M1279.2 232.9h29M1279.2 234.9h9M1315.2 234.9h7M1298.2 256.9h26M1307.2 258.9h2M1308.2 262.9h15M1308.2 266.9h28M1298.2 278.9h25M1307.2 280.9h2M1312.2 284.9h28M1312.2 290.9h15M1316.2 304.9h33" stroke="#ce9178" stroke-width="1.2" opacity=".56" fill="none"/>
<path d="M1271.2 104.9h1M1272.2 104.9h4M1276.2 104.9h1M1286.2 104.9h1M1272.2 108.9h1M1273.2 108.9h5M1278.2 108.9h1M1290.2 108.9h1M1286.2 118.9h1M1287.2 128.9h1M1294.2 128.9h2M1301.2 128.9h1M1303.2 128.9h1M1283.2 130.9h1M1301.2 130.9h3M1269.2 132.9h1M1284.2 132.9h3M1264.2 134.9h1M1291.2 138.9h2M1294.2 138.9h1M1272.2 140.9h1M1280.2 140.9h3M1264.2 142.9h1M1284.2 146.9h2M1287.2 146.9h1M1279.2 148.9h1M1306.2 148.9h1M1272.2 150.9h2M1303.2 150.9h1M1272.2 152.9h2M1295.2 152.9h1M1272.2 154.9h2M1294.2 154.9h1M1272.2 156.9h2M1298.2 156.9h1M1272.2 158.9h2M1300.2 158.9h1M1283.2 162.9h1M1289.2 162.9h1M1297.2 162.9h1M1301.2 162.9h2M1271.2 164.9h1M1280.2 164.9h2M1287.2 164.9h1M1289.2 164.9h1M1280.2 166.9h1M1285.2 166.9h1M1268.2 168.9h1M1278.2 168.9h1M1286.2 168.9h1M1293.2 168.9h1M1296.2 168.9h1M1298.2 168.9h2M1308.2 168.9h1M1316.2 168.9h1M1329.2 168.9h2M1332.2 168.9h1M1276.2 170.9h1M1284.2 170.9h3M1268.2 172.9h1M1278.2 176.9h1M1287.2 176.9h1M1296.2 176.9h1M1304.2 176.9h2M1275.2 180.9h1M1281.2 180.9h1M1283.2 180.9h1M1277.2 182.9h2M1280.2 184.9h1M1290.2 184.9h3M1281.2 186.9h1M1277.2 188.9h2M1280.2 190.9h1M1293.2 190.9h3M1281.2 192.9h1M1277.2 194.9h2M1280.2 196.9h1M1289.2 196.9h3M1281.2 198.9h1M1277.2 200.9h2M1280.2 202.9h1M1294.2 202.9h3M1281.2 204.9h1M1279.2 206.9h1M1287.2 208.9h1M1305.2 208.9h1M1310.2 208.9h1M1339.2 208.9h2M1280.2 210.9h1M1288.2 210.9h3M1281.2 212.9h1M1268.2 214.9h1M1264.2 216.9h1M1289.2 220.9h2M1292.2 220.9h1M1279.2 222.9h1M1299.2 222.9h1M1272.2 224.9h2M1304.2 224.9h1M1271.2 226.9h1M1277.2 226.9h3M1282.2 226.9h1M1287.2 226.9h1M1288.2 226.9h14M1302.2 226.9h1M1307.2 226.9h3M1312.2 226.9h3M1316.2 226.9h1M1276.2 228.9h2M1279.2 228.9h1M1281.2 228.9h3M1285.2 228.9h1M1292.2 228.9h1M1298.2 228.9h1M1299.2 228.9h14M1313.2 228.9h1M1317.2 228.9h1M1319.2 228.9h1M1321.2 228.9h1M1327.2 228.9h1M1268.2 230.9h1M1276.2 232.9h2M1308.2 232.9h1M1276.2 234.9h2M1289.2 234.9h1M1305.2 234.9h1M1310.2 234.9h2M1313.2 234.9h1M1322.2 234.9h1M1272.2 238.9h1M1278.2 238.9h1M1282.2 238.9h2M1264.2 242.9h1M1282.2 246.9h1M1293.2 246.9h1M1295.2 246.9h1M1279.2 248.9h1M1297.2 248.9h1M1302.2 248.9h1M1307.2 248.9h2M1264.2 250.9h1M1286.2 254.9h2M1289.2 254.9h1M1283.2 256.9h1M1289.2 256.9h1M1297.2 256.9h1M1324.2 256.9h2M1271.2 258.9h1M1280.2 258.9h2M1288.2 258.9h2M1291.2 258.9h1M1299.2 258.9h1M1306.2 258.9h1M1309.2 258.9h2M1312.2 258.9h1M1276.2 260.9h1M1277.2 260.9h14M1291.2 260.9h1M1295.2 260.9h1M1303.2 260.9h2M1320.2 260.9h1M1325.2 260.9h1M1330.2 260.9h2M1283.2 262.9h1M1301.2 262.9h1M1306.2 262.9h1M1323.2 262.9h2M1268.2 264.9h1M1275.2 264.9h1M1283.2 266.9h1M1301.2 266.9h1M1306.2 266.9h1M1336.2 266.9h2M1268.2 268.9h1M1272.2 270.9h1M1280.2 270.9h3M1264.2 272.9h1M1285.2 276.9h2M1288.2 276.9h1M1283.2 278.9h1M1289.2 278.9h1M1297.2 278.9h1M1323.2 278.9h2M1271.2 280.9h1M1280.2 280.9h2M1288.2 280.9h2M1291.2 280.9h1M1299.2 280.9h1M1306.2 280.9h1M1309.2 280.9h2M1312.2 280.9h1M1275.2 282.9h2M1281.2 282.9h1M1282.2 282.9h14M1296.2 282.9h1M1305.2 282.9h1M1313.2 282.9h2M1316.2 282.9h1M1287.2 284.9h1M1305.2 284.9h1M1310.2 284.9h1M1340.2 284.9h2M1272.2 286.9h1M1279.2 286.9h1M1287.2 290.9h1M1305.2 290.9h1M1310.2 290.9h1M1327.2 290.9h2M1272.2 292.9h1M1268.2 294.9h1M1272.2 296.9h1M1280.2 296.9h3M1264.2 298.9h1M1290.2 302.9h2M1293.2 302.9h1M1278.2 304.9h1M1291.2 304.9h1M1309.2 304.9h1M1314.2 304.9h1M1271.2 306.9h1M1278.2 306.9h2M1281.2 306.9h2M1284.2 306.9h1M1278.2 308.9h1M1283.2 308.9h4M1268.2 310.9h1M1275.2 310.9h1M1276.2 312.9h1M1284.2 312.9h3M1268.2 314.9h1M1264.2 316.9h1M1286.2 320.9h1M1297.2 320.9h1M1299.2 320.9h1M1286.2 322.9h1M1302.2 322.9h1M1307.2 322.9h1M1312.2 322.9h2M1264.2 324.9h1M1260.2 328.9h1" stroke="#d4d4d4" stroke-width="1.2" opacity=".56" fill="none"/>
<path d="M1260.2 112.9h3M1261.2 114.9h11M1261.2 116.9h2M1272.2 236.9h10" stroke="#6a9955" stroke-width="1.2" opacity=".56" fill="none"/>
<rect x="1349" y="104" width="1.1" height="407" fill="#3a3a3a"/><rect x="1349" y="104" width="16" height="1" fill="#3a3a3a"/>
<rect x="1350.2" y="276.3" width="14.8" height="54.6" fill="#424242"/>
<rect x="1350.5" y="298.6" width="14.5" height="2" fill="#6a6a6a"/>
<rect x="1360.7" y="129.5" width="4.3" height="6.3" fill="#d1aa00"/>
<rect x="1360.7" y="390.7" width="4.3" height="6.3" fill="#d1aa00"/>
<rect x="1253" y="104" width="7" height="407" fill="url(#mshadow)"/>
<defs><linearGradient id="mshadow" x1="0" x2="1"><stop offset="0" stop-color="#000" stop-opacity=".0"/><stop offset="1" stop-color="#000" stop-opacity="0"/></linearGradient></defs>
</svg>
<div class="a" style="left:364px;top:104px;width:888px;height:5px;background:linear-gradient(rgba(0,0,0,.5),rgba(0,0,0,0))"></div>
<!-- JOptionPane dialog -->
<div class="a" style="left:538px;top:242px;width:291px;height:238px;background:#ffffff;box-shadow:0 3px 16px rgba(0,0,0,.4)"></div>
<div class="a" style="left:538px;top:272px;width:290px;height:207px;background:#eeeeee"></div>
<svg style="left:808px;top:250px" width="12" height="12"><path d="M.9 1.400l10.200 9.800M11.100 1.400L.9 11.200" stroke="#111" stroke-width="1.100" fill="none"/></svg>
<div class="a" style="left:552px;top:285px;width:27px;height:27px;background:rgba(0,0,0,.3);filter:blur(1.800px)"></div>
<div class="a" style="left:549px;top:282px;width:27px;height:27px;border:1px solid #669966;background:#99cc99"></div>
<div class="a" style="left:595px;top:413px;width:223px;height:19px;background:#fff;border:1px solid #7a8a99;box-shadow:inset 0 0 0 1px #c6d5e6"></div>
<div class="a" style="left:597px;top:416px;width:1px;height:14px;background:#000"></div>
<div class="a" style="left:619px;top:442px;width:61px;height:26px;border:2px solid #7a8a99;background:linear-gradient(#ffffff 0%,#dde8f3 20%,#c8daeb 55%,#b8cfe5 100%)"></div>
<div class="a" style="left:686px;top:442px;width:61px;height:26px;border:1px solid #7a8a99;background:linear-gradient(#ffffff 0%,#dde8f3 20%,#c8daeb 55%,#b8cfe5 100%)"></div>

<!-- taskbar icons -->
<svg style="left:0;top:728px" width="1365" height="39" viewBox="0 728 1365 39">
<!-- start -->
<path d="M15.800 742.300l6.700-.95v6.500h-6.700zM23.300 741.250l9-1.250v7.850h-9zM15.800 748.650h6.700v6.500l-6.700-.95zM23.300 748.650h9v7.850l-9-1.250z" fill="#ffffff"/>
<!-- search -->
<circle cx="74.300" cy="746" r="5.200" fill="none" stroke="#fff" stroke-width="1.300"/><path d="M70.600 749.900l-6.400 6.700" stroke="#fff" stroke-width="1.400"/>
<!-- task view -->
<g fill="none" stroke="#fff" stroke-width="1.100"><path d="M112.500 740.200v14.600M122.500 740.200v14.600M112.500 743.800h10M112.500 751.200h10M112 740.500h2.400M120.600 740.500h2.400M112 754.500h2.400M120.600 754.500h2.400M126.700 740.200v2.600M126.700 747.500v7.300"/></g><rect x="125.500" y="743.600" width="2.600" height="2.900" fill="#fff"/>
<!-- this pc -->
<path d="M166.500 737l15.800 2.200v11.600l-15.800-1.800z" fill="#3a9be3"/><path d="M167.800 738.600l13.200 1.900v9l-13.200-1.500z" fill="#7cc4f5"/><path d="M160 753.600l12-2.400 7.200 3-12.400 3z" fill="#c9ced3"/><path d="M171.500 750h4l1 2.500h-6z" fill="#8a9096"/>
<!-- filezilla -->
<rect x="208.200" y="736.200" width="23.600" height="23.400" fill="#ab1016"/><rect x="209.700" y="737.700" width="20.600" height="20.400" fill="none" stroke="#8a0f14" stroke-width="1" stroke-dasharray="1.500 1.500"/>
<path transform="translate(1 0)" d="M211.500 741.500h10.500l-.6 2.600h-6.600l-.9 3.600h5.800l-.6 2.500h-5.800l-1.500 5.800h-3.500zM221.500 746.800h7.500l-.4 2-5.300 4.600h4.400l-.6 2.600h-8.300l.4-2 5.300-4.600h-3.600z" fill="#fff"/>
<!-- chrome -->
<g transform="translate(19.020 50.660) scale(.932)"><circle cx="268" cy="748" r="11.800" fill="#e94335"/><path d="M268 748l-10.200 5.900a11.800 11.800 0 0 0 10.200 5.900l5.100-8.900z" fill="#34a853"/><path d="M268 748h11.800a11.800 11.800 0 0 1-11.800 11.800l5.100-8.900z" fill="#fbbc05"/><path d="M257.800 742.100a11.800 11.800 0 0 0 0 11.800l5.100-2.950z" fill="#34a853"/><path d="M279.100 743.900a11.800 11.800 0 0 1-11.100 15.900l5.500-9.500-.3-6.400z" fill="#fbbc05"/><circle cx="268" cy="748" r="5.400" fill="#fff"/><circle cx="268" cy="748" r="4.300" fill="#4285f4"/></g>
<!-- wamp -->
<rect x="308.700" y="738.400" width="18.500" height="18.800" rx="6.200" fill="none" stroke="#f01c98" stroke-width="3.600"/><path d="M312.800 742.400v8.200a2.500 2.500 0 0 0 2.500 2.500h5.600a2.500 2.500 0 0 0 2.500-2.500v-8.200M318.100 746.200v6.900" fill="none" stroke="#f01c98" stroke-width="2.500"/><path d="M306 747.800h4.600M325.400 747.800h4.600" stroke="#1b1b1b" stroke-width="1.300"/>
<!-- mail -->
<path d="M355 743.500l12-6.900 12.100 6.900v15.500h-24.100z" fill="#0f6cbd"/><path d="M357.500 744h19v9h-19z" fill="#f2f2f2"/><path d="M355 743.800l12 8.200 12.100-8.200v15.200h-24.100z" fill="#22a4ec"/><circle cx="379.800" cy="755.400" r="7.800" fill="#2c3840" stroke="#bdbdbd" stroke-width="1"/>
<!-- notepad red -->
<path d="M411.500 736.500l13.500 3.500-6 17.500-14.500-4z" fill="#e04a4a"/><path d="M411.500 736.500l13.500 3.500-1 3-13.600-3.500z" fill="#f3b4b4"/><path d="M424 743l1.500 .5-6 16-1.500-2z" fill="#d8dde6"/><path d="M409.500 743l11 2.900M408.500 746l11 2.900M407.500 749l11 2.900" stroke="#b83a3a" stroke-width=".8"/><path d="M415.300 751.600v6.400M412.100 754.800h6.400" stroke="#2fb344" stroke-width="2.400"/><path d="M422.500 751.600v6.400M419.300 754.800h6.400" stroke="#f5c400" stroke-width="2.400"/>
<!-- coins -->
<g fill="#a38c1f" stroke="#6f5d10" stroke-width=".7"><path d="M454 739h11v9h-11z"/><ellipse cx="459.500" cy="739" rx="5.500" ry="2.200" fill="#c9b23c"/><path d="M463.500 744h11v9h-11z"/><ellipse cx="469" cy="744" rx="5.500" ry="2.200" fill="#c9b23c"/><path d="M457 749h12v9.500h-12z"/><ellipse cx="463" cy="749" rx="6" ry="2.400" fill="#d6bf45"/></g>
<!-- photoshop -->
<rect x="503" y="737.500" width="20.500" height="20" fill="#071a2b" stroke="#19c1f5" stroke-width="1.400"/>
<!-- pen circle -->
<circle cx="563" cy="747.800" r="11" fill="#10260f" stroke="#76c225" stroke-width="1.900"/><g transform="translate(1 .3)"><path d="M557 741.500l8.500 6 3.500 6.500-7-2-6.500-8z" fill="#fff"/><path d="M556 742.500l2.500-2 2 2.500-2.500 2z" fill="#cfd8c8"/></g>
<!-- vscode -->
<g transform="translate(599.500 736.500) scale(.232)"><path d="M75 .9 29.400 38 12.200 25a4.200 4.200 0 0 0-5.300.2L1.400 30.200a4.200 4.200 0 0 0 0 6.200L16.300 50 1.400 63.600a4.200 4.200 0 0 0 0 6.200l5.500 5a4.200 4.200 0 0 0 5.300.2l17.200-13L75 99.100 75 72.700 45.100 50 75 27.300z" fill="#1f8ad2"/><path d="M68.800 2.100a6.200 6.200 0 0 1 7.100-1.200l20.600 9.900a6.200 6.200 0 0 1 3.500 5.600v67.200a6.200 6.200 0 0 1-3.500 5.600l-20.600 9.900a6.200 6.200 0 0 1-7.100-1.200L75 92z" fill="#2ba7f3"/></g>
<!-- orange capture -->
<rect x="648.500" y="736.500" width="24" height="23" rx="1.500" fill="#ee6a2c"/><circle cx="660.500" cy="748" r="4.600" fill="#f4e3c3"/><path d="M652 743v-3.500h3.500M669 743v-3.500h-3.500M652 753v3.500h3.500M669 753v3.500h-3.500" fill="none" stroke="#f8c9a8" stroke-width="1.200"/>
<!-- zoom -->
<rect x="698" y="737" width="23" height="23" rx="7" fill="#3b8bf5"/><rect x="702.500" y="744.500" width="9.500" height="7.500" rx="1.800" fill="#fff"/><path d="M712.800 747.300l4-2.600v7.100l-4-2.600z" fill="#fff"/>
<!-- vmware -->
<rect x="749.200" y="743.600" width="14" height="14.200" rx="2.500" fill="none" stroke="#f08c1d" stroke-width="3.800"/><rect x="754.500" y="737.800" width="14.600" height="14.200" rx="2.500" fill="none" stroke="#1f9cd6" stroke-width="3.800"/><path d="M754.500 749.500v-4" stroke="#f08c1d" stroke-width="3.800"/>
<!-- teamviewer -->
<rect x="795.500" y="736.500" width="24" height="23.500" rx="1" fill="#0e7be0"/><circle cx="807.500" cy="748.200" r="9.300" fill="#fff"/><path d="M799.500 748.200l4.500-3.300v2.100h7v-2.100l4.500 3.300-4.500 3.300v-2.100h-7v2.100z" fill="#0e6fd0"/>
<!-- teams -->
<circle cx="862" cy="741.500" r="3" fill="#7b83eb"/><circle cx="867" cy="743.500" r="2.300" fill="#5059c9"/><path d="M858 746h9.500v7.500a4.700 4.700 0 0 1-9.500 0z" fill="#7b83eb"/><path d="M864 746.500h6.500v5.500a3.300 3.300 0 0 1-6.500 0z" fill="#5059c9"/><rect x="844.500" y="741.500" width="13" height="13" rx="1.500" fill="#4b53bc"/><path d="M847.500 744.800h7M851 744.800v7" stroke="#fff" stroke-width="1.700"/>
<!-- purple doc -->
<rect x="893.500" y="736.500" width="23.500" height="23.500" rx="1" fill="#8e1f9a"/><path d="M898 739.500h10l5 5v12.500h-15z" fill="#b457bd" opacity=".7"/><path d="M899.500 744l3-1.500 8.500 10.500.8 3.800-3.500-1.600z" fill="#fff"/><path d="M908 739.500v5h5" fill="none" stroke="#e6c6ea" stroke-width="1"/>
<!-- folder -->
<path d="M943 739.500h8l2 2.500h12v4h-22z" fill="#e8a91e"/><path d="M943 743h22v15h-22z" fill="#ffd257"/><path d="M949 751.500h10v6.500h-3v-3.500h-4v3.500h-3z" fill="#2a86dd"/>
<!-- pdf -->
<path d="M992 736.500h17l5 5v18.500h-22z" fill="#f27b21"/><path d="M1009 736.500l5 5h-5z" fill="#fbd0a8"/><path d="M1008.500 744.500a5.600 5.600 0 1 0 1 5.500c-1.500 1.800-4.500 1.600-5.300-.4 2.300.9 4.800-.8 5.300-3z" fill="#fff"/>
<!-- active indicators -->
<rect x="591.500" y="765" width="40" height="2" fill="#76b9ed"/><rect x="934.500" y="765" width="40" height="2" fill="#76b9ed"/><rect x="983.500" y="765" width="40" height="2" fill="#76b9ed"/>
<!-- tray -->
<g fill="none" stroke="#fff" stroke-width="1.200"><path d="M1132.500 751l6-6 6 6"/>
<path d="M1181.800 756.500a13 13 0 0 1 12.800-12.800M1185.300 756.500a9.500 9.500 0 0 1 9.300-9.300M1188.800 756.500a6 6 0 0 1 5.800-5.800" stroke-width="1.100"/>
<path d="M1202.300 745.600h2.700l3.800-3.600v11.600l-3.800-3.600h-2.700z" stroke-width="1"/><path d="M1211 745a4 4 0 0 1 0 5.600M1213.300 743a7 7 0 0 1 0 9.600M1215.600 741.200a9.800 9.800 0 0 1 0 13.200" stroke-width="1"/>
<rect x="1230.500" y="743.800" width="11.500" height="7" stroke-width="1.100"/><path d="M1242.600 746v2.600"/><path d="M1226.800 741.500v3M1229.300 741.500v3M1225.800 744.700h4.500v2a2.200 2.200 0 0 1-4.500 0zM1228 749v2.500" stroke-width="1"/>
</g><g><path d="M1325.300 740.400h15.500v10.600h-3.300v3.200l-3.200-3.200h-9z" fill="#fff"/><path d="M1328 743.500h10.200M1328 746h10.200M1328 748.500h10.200" stroke="#1b1b1b" stroke-width="1"/></g>
<path transform="translate(-1.500 .3)" d="M1159.500 752.500a3.300 3.300 0 0 1-.3-6.600 4.300 4.300 0 0 1 8.200-1.200 3.600 3.600 0 0 1 4.500 3.600 2.200 2.200 0 0 1-1 4.200z" fill="#d8d8d8"/>
<rect x="1231.600" y="744.900" width="9.300" height="4.800" fill="#fff"/>
<ellipse cx="1340.600" cy="754.800" rx="9.700" ry="8.400" fill="#2a2a2a" stroke="#9a9a9a" stroke-width="1"/><rect x="1361" y="728" width="1" height="39" fill="#555"/>
</svg>

<span class="t fs" style="left:51.8px;top:8.5px;font-size:15.5px;color:#9d9d9d;transform:scaleX(0.9166);">File</span>
<span class="t fs" style="left:94.6px;top:8.5px;font-size:15.5px;color:#9d9d9d;transform:scaleX(0.9619);">Edit</span>
<span class="t fs" style="left:139.5px;top:8.5px;font-size:15.5px;color:#9d9d9d;transform:scaleX(0.9833);">Selection</span>
<span class="t fs" style="left:221.2px;top:8.5px;font-size:15.5px;color:#9d9d9d;transform:scaleX(0.9842);">View</span>
<span class="t fs" style="left:273.5px;top:8.5px;font-size:15.5px;color:#9d9d9d;transform:scaleX(0.9619);">Go</span>
<span class="t fs" style="left:313px;top:8.5px;font-size:15.5px;color:#9d9d9d;transform:scaleX(0.9284);">Run</span>
<span class="t fs" style="left:359.3px;top:8.5px;font-size:15.5px;color:#9d9d9d;transform:scaleX(0.9782);">Terminal</span>
<span class="t fs" style="left:436.5px;top:8.5px;font-size:15.5px;color:#9d9d9d;transform:scaleX(0.9878);">Help</span>
<span class="t fs" style="left:618.5px;top:9.0px;font-size:14.4px;color:#9d9d9d;transform:scaleX(0.9808);">KayitListesi.java - 2. Ders - Visual Studio Code [Administrator]</span>
<span class="t fs" style="left:81.8px;top:47.5px;font-size:13.2px;color:#bbbbbb;transform:scaleX(0.8325);">EXPLORER</span>
<span class="t fs" style="left:81.8px;top:81.2px;font-size:13.2px;color:#cccccc;font-weight:bold;transform:scaleX(0.9374);">OPEN EDITORS</span>
<span class="t fs" style="left:81.8px;top:108.0px;font-size:13.2px;color:#cccccc;font-weight:bold;transform:scaleX(0.9199);">2. DERS</span>
<span class="t fs" style="left:125.5px;top:134.5px;font-size:15.5px;color:#cccccc;transform:scaleX(0.9799);">cokBoyutluDizi.java</span>
<span class="t fs" style="left:125.5px;top:160.9px;font-size:15.5px;color:#cccccc;transform:scaleX(0.9513);">diziyeElemanEkleme.java</span>
<span class="t fs" style="left:125.5px;top:187.3px;font-size:15.5px;color:#cccccc;transform:scaleX(0.9615);">hashMap.java</span>
<span class="t fs" style="left:125.5px;top:213.7px;font-size:15.5px;color:#cca700;transform:scaleX(0.9403);">KayitListesi.java</span>
<span class="t fs" style="left:336.9px;top:214.2px;font-size:14px;color:#cca700;transform:scaleX(0.8721);">2</span>
<span class="t fs" style="left:125.5px;top:240.1px;font-size:15.5px;color:#cccccc;transform:scaleX(0.9881);">mapIciMapKullanimi.java</span>
<span class="t fs" style="left:125.5px;top:266.5px;font-size:15.5px;color:#cccccc;transform:scaleX(0.9828);">tekBoyutluDizi.java</span>
<span class="t fs" style="left:81.9px;top:574.5px;font-size:13.2px;color:#cccccc;font-weight:bold;transform:scaleX(0.9552);">OUTLINE</span>
<span class="t fs" style="left:81.9px;top:600.7px;font-size:13.2px;color:#cccccc;font-weight:bold;transform:scaleX(0.9553);">NPM SCRIPTS</span>
<span class="t fs" style="left:81.9px;top:627.1px;font-size:13.2px;color:#cccccc;font-weight:bold;transform:scaleX(0.9196);">DEPENDENCIES</span>
<span class="t fs" style="left:81.9px;top:653.5px;font-size:13.2px;color:#cccccc;font-weight:bold;transform:scaleX(0.9034);">JAVA PROJECTS</span>
<span class="t fs" style="left:81.9px;top:679.9px;font-size:13.2px;color:#cccccc;font-weight:bold;transform:scaleX(0.9988);">MAVEN</span>
<span class="t fs" style="left:402.7px;top:47.3px;font-size:15.5px;color:#ffffff;transform:scaleX(0.9429);">KayitListesi.java</span>
<span class="t fs" style="left:581.6px;top:47.3px;font-size:15.5px;color:#8c8c8c;transform:scaleX(0.9875);">mapIciMapKullanimi.java</span>
<span class="t fs" style="left:409.8px;top:81.8px;font-size:15.5px;color:#a9a9a9;transform:scaleX(0.9420);">KayitListesi.java</span>
<span class="t fs" style="left:561.3px;top:81.8px;font-size:15.5px;color:#a9a9a9;transform:scaleX(0.9374);">KayitListesi</span>
<span class="t fs" style="left:681.5px;top:81.8px;font-size:15.5px;color:#e0e0e0;transform:scaleX(0.9713);">kayitListele()</span>
<span class="t fs" style="left:387.6px;top:524.2px;font-size:13.2px;color:#8b8b8b;transform:scaleX(0.8732);">PROBLEMS</span>
<span class="t fs" style="left:469.3px;top:524.0px;font-size:12.5px;color:#ffffff;transform:scaleX(0.9204);">2</span>
<span class="t fs" style="left:507.3px;top:524.2px;font-size:13.2px;color:#e7e7e7;transform:scaleX(0.9102);">TERMINAL</span>
<span class="t fs" style="left:593px;top:524.2px;font-size:13.2px;color:#8b8b8b;transform:scaleX(0.8563);">REFACTOR PREVIEW</span>
<span class="t fs" style="left:958.9px;top:524.3px;font-size:15.5px;color:#f0f0f0;transform:scaleX(0.9594);">4: Java Process Console</span>
<span class="t fs" style="left:39.2px;top:705.6px;font-size:14.4px;color:#fff;transform:scaleX(0.8733);">0</span>
<span class="t fs" style="left:71.8px;top:705.6px;font-size:14.4px;color:#fff;transform:scaleX(0.8733);">2</span>
<span class="t fs" style="left:809px;top:705.6px;font-size:14.4px;color:#fff;transform:scaleX(0.9462);">Ln 63, Col 22</span>
<span class="t fs" style="left:909.4px;top:705.6px;font-size:14.4px;color:#fff;transform:scaleX(0.9047);">Spaces: 4</span>
<span class="t fs" style="left:987.5px;top:705.6px;font-size:14.4px;color:#fff;transform:scaleX(0.9195);">UTF-8</span>
<span class="t fs" style="left:1044.5px;top:705.6px;font-size:14.4px;color:#fff;transform:scaleX(0.8326);">CRLF</span>
<span class="t fs" style="left:1095px;top:705.6px;font-size:14.4px;color:#fff;transform:scaleX(0.8748);">Java</span>
<span class="t fs" style="left:1177.3px;top:705.6px;font-size:14.4px;color:#fff;transform:scaleX(0.8842);">JavaSE-11</span>
<span class="t fs" style="left:1266.5px;top:728.9px;font-size:12px;color:#fff;transform:scaleX(0.8824);">15:10</span>
<span class="t fs" style="left:1253.6px;top:746.0px;font-size:12px;color:#fff;transform:scaleX(0.8774);">10.01.2021</span>
<span class="t fs" style="left:546.4px;top:247.1px;font-size:12.2px;color:#000;transform:scaleX(1.0107);">Input</span>
<span class="t fs" style="left:555.8px;top:285.9px;font-size:23px;color:#005000;font-weight:bold;transform:scaleX(0.9671);-webkit-text-stroke:.7px #005000;text-shadow:0 0 1.500px #ccffcc,0 0 2px #ccffcc,0 0 2.500px #ccffcc;">?</span>
<span class="t fs" style="left:595.4px;top:281.2px;font-size:12px;color:#2b2b2b;font-weight:bold;transform:scaleX(0.9757);">Lütfen Seçim Yapınız:</span>
<span class="t fs" style="left:595.4px;top:300.2px;font-size:12px;color:#2b2b2b;font-weight:bold;transform:scaleX(1.0171);">************************</span>
<span class="t fs" style="left:595.6px;top:336.2px;font-size:12px;color:#2b2b2b;font-weight:bold;transform:scaleX(0.9740);">[1] Öğrenci Ekle</span>
<span class="t fs" style="left:595.6px;top:355.0px;font-size:12px;color:#2b2b2b;font-weight:bold;transform:scaleX(0.9698);">[2] Öğrenci Sil</span>
<span class="t fs" style="left:595.6px;top:373.8px;font-size:12px;color:#2b2b2b;font-weight:bold;transform:scaleX(0.9856);">[3] Öğrenci Listesi</span>
<span class="t fs" style="left:595.6px;top:392.8px;font-size:12px;color:#2b2b2b;font-weight:bold;transform:scaleX(0.9690);">[0 veya Cancel] Çıkış</span>
<span class="t fs" style="left:641.2px;top:445.3px;font-size:12px;color:#2b2b2b;font-weight:bold;transform:scaleX(0.9222);">OK</span>
<span class="t fs" style="left:697.2px;top:445.3px;font-size:12px;color:#2b2b2b;font-weight:bold;transform:scaleX(0.9858);">Cancel</span>
<span class="t fs" style="left:507px;top:738.3px;font-size:11.5px;color:#19c1f5;font-weight:bold;transform:scaleX(0.9589);">Ps</span>
<span class="t fs" style="left:376.4px;top:744.6px;font-size:11.5px;color:#fff;font-weight:bold;transform:scaleX(0.9678);">7</span>
<span class="t fs" style="left:1334.5px;top:744.8px;font-size:11.5px;color:#fff;font-weight:bold;transform:scaleX(0.9768);">30</span>
<span class="t fs" style="left:998px;top:745.6px;font-size:5.5px;color:#fff;font-weight:bold;transform:scaleX(1.0000);">PDF</span>
</body></html>
